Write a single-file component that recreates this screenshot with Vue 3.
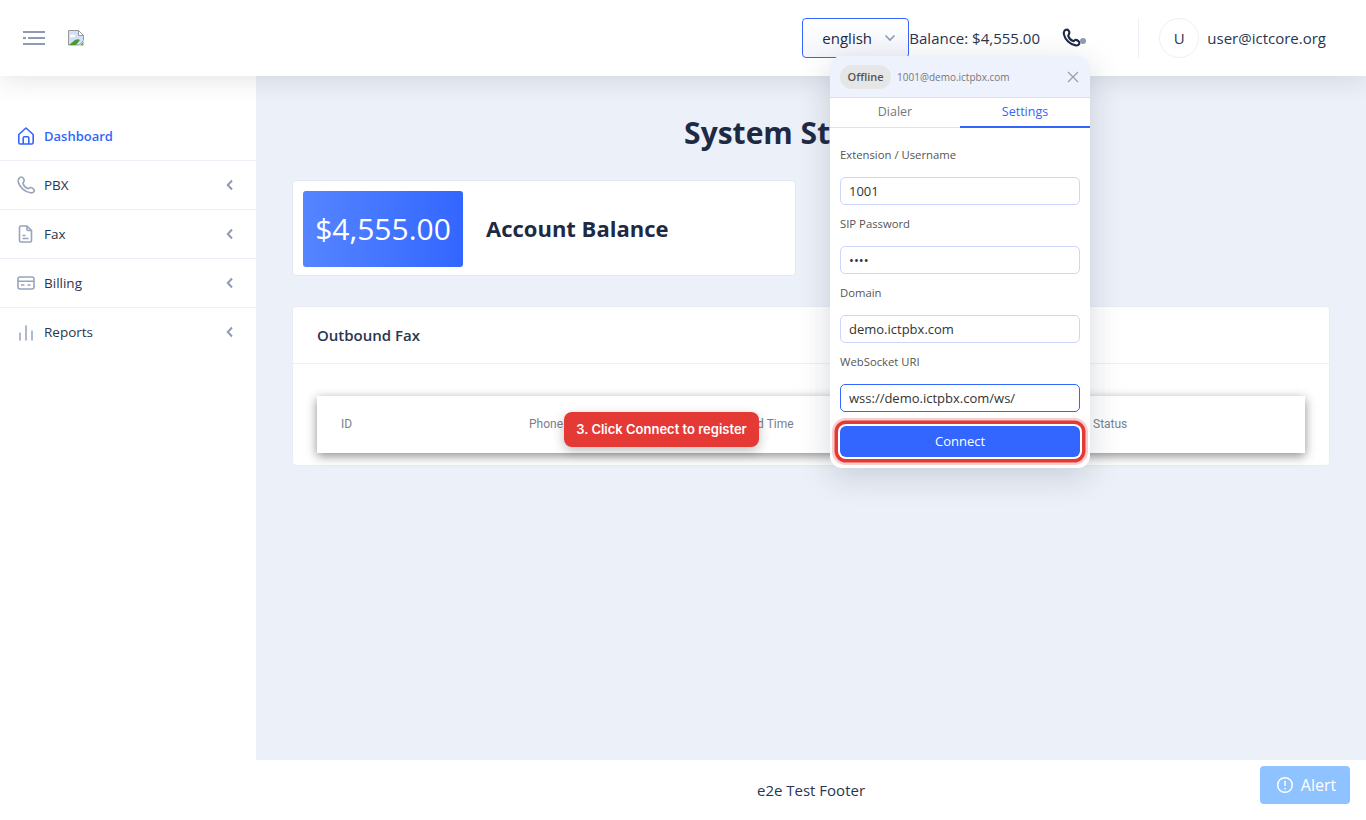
<script setup>
const navItems = [
  { label: 'Dashboard', icon: 'home', active: true },
  { label: 'PBX', icon: 'phone', chevron: true },
  { label: 'Fax', icon: 'doc', chevron: true },
  { label: 'Billing', icon: 'card', chevron: true },
  { label: 'Reports', icon: 'bars', chevron: true }
]
const fields = [
  { label: 'Extension / Username', value: '1001', type: 'text' },
  { label: 'SIP Password', value: '1001', type: 'password' },
  { label: 'Domain', value: 'demo.ictpbx.com', type: 'text' },
  { label: 'WebSocket URI', value: 'wss://demo.ictpbx.com/ws/', type: 'text', focus: true }
]
</script>

<template>
  <div class="app">
    <header class="topbar">
      <svg class="menu-icon" width="22" height="16" viewBox="0 0 22 16" fill="none" stroke="#8f9bb3" stroke-width="2.200">
        <path d="M0 2h22M5 8h17M0 14h22" />
        <path d="M0 8h3" />
      </svg>
      <svg class="broken-img" width="16" height="16" viewBox="0 0 16 16">
        <path d="M.5.5h10l5 5v5l-4 4.500H.5z" fill="#cfe0f8" stroke="#9a9a9a" />
        <path d="M10.500.5v5h5z" fill="#fff" stroke="#9a9a9a" />
        <path d="M2 6c1-2 3-2 4-1 1 0 2 1 1 2H2z" fill="#fff" />
        <path d="M1 15l6-5c2-1 4-1 5 0l-4 5z" fill="#4c9a2f" />
        <path d="M12 15.500l3.500-4v4z" fill="#6aa84f" />
      </svg>
      <div class="top-right">
        <div class="lang">
          <span>english</span>
          <svg width="12" height="8" viewBox="0 0 12 8" fill="none" stroke="#8f9bb3" stroke-width="1.600"><path d="M1.500 1.500 6 6l4.500-4.500" /></svg>
        </div>
        <span class="balance">Balance: $4,555.00</span>
        <div class="call">
          <svg class="handset" width="19" height="19" viewBox="0 0 18 18" fill="none" stroke="#1e2a44" stroke-width="2" stroke-linejoin="round">
            <path d="M4.500 1.500C2.500 1.500 1.300 3.500 1.800 6 3 11.500 8 15.800 13 16.500c2 .3 3.500-1 3.500-2.300s-2-3-3.500-3c-1 0-1.500 1.400-2.500 1.200-2-.6-4-3-4.600-4.900C5.700 6.500 7 6 7 4.600 7 3.200 5.800 1.500 4.500 1.500z" />
          </svg>
          <span class="dot"></span>
        </div>
        <div class="divider"></div>
        <div class="avatar">U</div>
        <span class="email">user@ictcore.org</span>
      </div>
    </header>

    <div class="body">
      <aside class="sidebar">
        <nav class="nav">
          <div v-for="item in navItems" :key="item.label" class="nav-item" :class="{ active: item.active }">
            <svg class="nav-icon" width="18" height="18" viewBox="0 0 18 18" fill="none" stroke="currentColor" stroke-width="1.600" stroke-linejoin="round">
              <template v-if="item.icon === 'home'">
                <path d="M1.800 7.500 9 1l7.200 6.500v8a1.500 1.500 0 0 1-1.500 1.500H3.300a1.500 1.500 0 0 1-1.500-1.500z" />
                <path d="M6.200 17v-6a1.200 1.200 0 0 1 1.200-1.200h3.200a1.200 1.200 0 0 1 1.200 1.200v6" />
              </template>
              <path v-else-if="item.icon === 'phone'" d="M4.500 1C2.500 1 .8 3.200 1.300 6 2.500 11.500 8 16 13.500 16.800c2 .3 3.800-.8 3.800-2.300 0-1.300-2.200-3-3.800-3-1 0-1.500 1.300-2.600 1.100-2-.6-4.300-3.100-4.900-5.100C5.700 6.500 7.200 6 7.200 4.500 7.200 3 5.800 1 4.500 1z" />
              <template v-else-if="item.icon === 'doc'">
                <path d="M4 1h6l4.500 4.500v10a1.500 1.500 0 0 1-1.500 1.500H4a1.500 1.500 0 0 1-1.500-1.500v-13A1.500 1.500 0 0 1 4 1z" />
                <path d="M10 1v3.500a1 1 0 0 0 1 1h3.500M5.500 10.500h3M5.500 13.500h6" />
              </template>
              <template v-else-if="item.icon === 'card'">
                <rect x="1" y="3" width="16" height="12" rx="2" />
                <path d="M1 7.200h16M4 11h3.500M10.500 11h3" />
              </template>
              <path v-else d="M3 10v7M9 3v14M15 8v9" stroke-width="1.500" stroke-linecap="round" />
            </svg>
            <span class="nav-label">{{ item.label }}</span>
            <svg v-if="item.chevron" class="chev" width="8" height="12" viewBox="0 0 8 12" fill="none" stroke="#8f9bb3" stroke-width="2"><path d="M6 1.500 1.800 6 6 10.500" /></svg>
          </div>
        </nav>
      </aside>

      <div class="main-col">
        <main class="main">
          <h1 class="title">System Statistics</h1>
          <div class="stat-grid">
            <section class="stat-card">
              <div class="stat-value">$4,555.00</div>
              <div class="stat-name">Account Balance</div>
            </section>
          </div>
          <section class="fax-card">
            <div class="fax-head">Outbound Fax</div>
            <div class="fax-body">
              <div class="table-head">
                <span>ID</span>
                <span>Phone</span>
                <span>Send Time</span>
                <span>Status</span>
              </div>
            </div>
          </section>
        </main>
        <footer class="footer">e2e Test Footer</footer>
      </div>
    </div>

    <div class="phone-panel">
      <div class="panel-head">
        <span class="badge">Offline</span>
        <span class="sip">1001@demo.ictpbx.com</span>
        <svg class="close" width="12" height="12" viewBox="0 0 12 12" fill="none" stroke="#9a9ea8" stroke-width="1.200"><path d="M1 1l10 10M11 1 1 11" /></svg>
      </div>
      <div class="tabs">
        <span class="tab">Dialer</span>
        <span class="tab on">Settings</span>
      </div>
      <div class="form">
        <div v-for="f in fields" :key="f.label" class="field">
          <label class="field-label">{{ f.label }}</label>
          <input class="field-input" :class="{ focus: f.focus }" :type="f.type" :value="f.value" readonly />
        </div>
        <button class="connect">Connect</button>
      </div>
    </div>

    <div class="tip">3. Click Connect to register</div>

    <button class="alert">
      <svg width="18" height="18" viewBox="0 0 18 18" fill="none" stroke="#fff" stroke-width="1.500">
        <circle cx="9" cy="9" r="7.300" />
        <path d="M9 4.800v5.200M9 12v1.600" />
      </svg>
      Alert
    </button>
  </div>
</template>

<style>
html, body { margin: 0; padding: 0; overflow: hidden; }
</style>

<style scoped>
.app {
  position: relative;
  width: 1366px;
  height: 820px;
  overflow: hidden;
  display: flex;
  flex-direction: column;
  font-family: "Open Sans", "Noto Sans", sans-serif;
  color: #1e2a44;
  background: #fff;
}
.topbar {
  height: 76px;
  flex: none;
  display: flex;
  align-items: center;
  padding: 0 40px 0 23px;
  background: #fff;
  box-shadow: 0 4px 24px rgba(30, 42, 68, 0.12);
  position: relative;
  z-index: 2;
}
.menu-icon { margin-right: 23px; }
.top-right { margin-left: auto; display: flex; align-items: center; }
.lang {
  width: 107px;
  height: 40px;
  box-sizing: border-box;
  border: 1px solid #3366ff;
  border-radius: 4px;
  display: flex;
  align-items: center;
  padding-left: 19px;
  gap: 12px;
  font-size: 15px;
  font-weight: 500;
  background: linear-gradient(#fff, #f3f5fb);
}
.balance { font-size: 15px; width: 131px; white-space: nowrap; color: #2a3550; }
.call { position: relative; width: 24px; height: 24px; margin-left: 22px; }
.handset { display: block; margin-top: 2px; }
.dot { position: absolute; right: 0; top: 12px; width: 6px; height: 6px; border-radius: 50%; background: #8f9bb3; }
.divider { width: 1px; height: 40px; background: #edf0f7; margin-left: 52px; }
.avatar {
  width: 40px; height: 40px; box-sizing: border-box; margin-left: 20px; margin-right: 8px;
  border: 1px solid #edf0f7; border-radius: 50%;
  display: flex; align-items: center; justify-content: center;
  font-size: 15px; color: #2a3550;
}
.email { font-size: 15px; color: #2a3550; white-space: nowrap; }
.body { flex: 1; display: flex; min-height: 0; }
.sidebar { width: 256px; flex: none; background: #fff; padding-top: 36px; box-sizing: border-box; }
.nav-item {
  height: 49px;
  box-sizing: border-box;
  border-bottom: 1px solid #edf0f7;
  display: flex;
  align-items: center;
  padding: 0 22px 0 17px;
  font-size: 13.500px;
  font-weight: 500;
  color: #2a3550;
}
.nav-item:last-child { border-bottom-color: transparent; }
.nav-item.active { color: #3366ff; font-weight: 600; font-size: 13px; }
.nav-icon { color: #98a3bc; margin-right: 9px; flex: none; }
.active .nav-icon { color: #3366ff; }
.nav-label { flex: 1; }
.main-col { flex: 1; display: flex; flex-direction: column; min-width: 0; }
.main { flex: 1; background: #ecf0f8; padding: 36px 36px 0; min-height: 0; }
.title { margin: 0 0 28px; height: 40px; line-height: 42px; font-size: 30px; font-weight: 700; text-align: center; color: #1e2a44; }
.stat-grid { display: grid; grid-template-columns: 1fr 1fr; gap: 30px; }
.stat-card {
  height: 96px; box-sizing: border-box;
  background: #fff; border: 1px solid #e4e8f2; border-radius: 4px;
  padding: 11px 10px 9px; display: flex; align-items: center;
}
.stat-value {
  width: 160px; height: 76px; box-sizing: border-box; padding-bottom: 2px; border-radius: 3px;
  background: linear-gradient(90deg, #5585ff, #3366ff);
  color: #fff; font-size: 30px;
  display: flex; align-items: center; justify-content: center;
}
.stat-name { margin: 0 0 2px 23px; font-size: 22px; font-weight: 700; color: #1e2a44; }
.fax-card {
  margin-top: 30px; height: 160px; box-sizing: border-box;
  background: #fff; border: 1px solid #e9ecf4; border-radius: 4px;
}
.fax-head {
  height: 57px; box-sizing: border-box; padding: 0 24px;
  display: flex; align-items: center;
  border-bottom: 1px solid #edf0f7;
  font-size: 15px; font-weight: 600; color: #2a3550;
}
.fax-body { padding: 32px 24px 0; }
.table-head {
  height: 57px;
  padding-bottom: 2px;
  box-sizing: border-box;
  background: #fff;
  box-shadow: 0 3px 10px rgba(0, 0, 0, 0.45);
  display: grid;
  grid-template-columns: 188px 208px 356px 1fr;
  align-items: center;
  font-family: Roboto, sans-serif;
  font-size: 12px;
  color: #7a7f8c;
}
.table-head span { padding-left: 24px; }
.footer {
  height: 60px; flex: none; background: #fff;
  display: flex; align-items: center; justify-content: center;
  font-size: 15px; color: #2a3550;
}
.phone-panel {
  position: absolute; left: 830px; top: 56px; z-index: 5;
  width: 260px; height: 412px;
  background: #fff; border-radius: 12px;
  box-shadow: 0 8px 32px rgba(30, 42, 68, 0.18);
  overflow: hidden;
}
.panel-head {
  height: 42px; box-sizing: border-box;
  background: #eef2fd; border-bottom: 1px solid #dbe2f6;
  display: flex; align-items: center; padding: 0 11px 0 10px;
}
.badge {
  height: 24px; padding: 0 7.500px; border-radius: 12px; background: #e6e6e6;
  display: flex; align-items: center;
  font-size: 11px; font-weight: 600; color: #555;
}
.sip { margin-left: 6px; font-size: 10px; color: #777; flex: 1; }
.tabs { display: flex; height: 30px; box-sizing: border-box; border-bottom: 1px solid #dbe2f6; }
.tab { flex: 1; text-align: center; line-height: 27px; font-size: 12.500px; color: #777; }
.tab.on { color: #3366ff; font-weight: 500; border-bottom: 2px solid #3366ff; height: 30px; box-sizing: border-box; }
.form { padding: 0 10px; }
.field { height: 69px; }
.field-label { display: block; height: 49px; line-height: 54px; font-size: 11.300px; font-weight: 500; color: #555; }
.field-input {
  display: block; box-sizing: border-box; width: 100%; height: 28px;
  border: 1px solid #ccd6fb; border-radius: 5px; padding: 0 8px;
  font-family: "Open Sans", sans-serif; font-size: 13px; color: #333; background: #fff; outline: 0;
}
.field-input.focus { border-color: #3366ff; }
.connect {
  display: block; width: 100%; height: 31px; margin-top: 22px; padding: 0 0 2px;
  border: 0; border-radius: 6px; background: #3366ff; color: #fff;
  font-family: "Open Sans", sans-serif; font-size: 13px;
  box-shadow: 0 0 0 2px #fff, 0 0 0 5.500px #e53935, 0 0 0 8px rgba(229, 57, 53, 0.25);
}
.tip {
  position: absolute; left: 564px; top: 412px; z-index: 4;
  width: 195px; height: 35px; box-sizing: border-box; padding-bottom: 1px;
  background: #e53935; color: #fff; border-radius: 8px;
  display: flex; align-items: center; justify-content: center;
  font-family: Inter, sans-serif; font-size: 13px; font-weight: 600;
  box-shadow: 0 4px 12px rgba(0, 0, 0, 0.25);
}
.alert {
  position: absolute; left: 1260px; top: 766px; z-index: 4;
  width: 90px; height: 38px; padding: 0 0 0 2px;
  background: #8fc3ff; border: 0; border-radius: 4px; color: #fff;
  display: flex; align-items: center; justify-content: center; gap: 7px;
  font-family: "Open Sans", sans-serif; font-size: 16px;
}
</style>
